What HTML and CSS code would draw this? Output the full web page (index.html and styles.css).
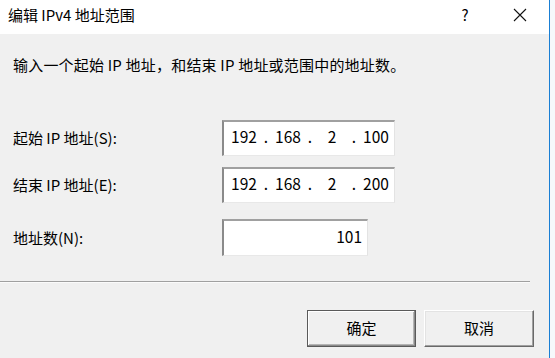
FILE: index.html
```html
<!DOCTYPE html>
<html lang="zh-CN">
<head>
<meta charset="utf-8">
<title>编辑 IPv4 地址范围</title>
<link rel="stylesheet" href="styles.css">
</head>
<body>
<div class="screen">
  <div class="window">
    <div class="titlebar">
      <span class="title">编辑 IPv4 地址范围</span>
      <span class="help">?</span>
      <span class="close">
        <svg width="14" height="14" viewBox="0 0 14 14"><path d="M1 1 L13 13 M13 1 L1 13" stroke="#111" stroke-width="1.1" fill="none"/></svg>
      </span>
    </div>
    <div class="content">
      <p class="intro">输入一个起始 IP 地址，和结束 IP 地址或范围中的地址数。</p>
      <div class="row row-first">
        <span class="label">起始 IP 地址(S):</span>
        <div class="edit ip">
          <span class="oct">192</span><span class="dot">.</span><span class="oct">168</span><span class="dot">.</span><span class="oct">2</span><span class="dot">.</span><span class="oct">100</span>
        </div>
      </div>
      <div class="row row-second">
        <span class="label">结束 IP 地址(E):</span>
        <div class="edit ip">
          <span class="oct">192</span><span class="dot">.</span><span class="oct">168</span><span class="dot">.</span><span class="oct">2</span><span class="dot">.</span><span class="oct">200</span>
        </div>
      </div>
      <div class="row row-third">
        <span class="label">地址数(N):</span>
        <div class="edit count">101</div>
      </div>
      <div class="sep"></div>
      <div class="buttons">
        <button class="btn btn-default">确定</button>
        <button class="btn">取消</button>
      </div>
    </div>
  </div>
</div>
</body>
</html>
```

FILE: styles.css
```css
html, body {
  margin: 0;
  padding: 0;
  width: 555px;
  height: 358px;
  overflow: hidden;
  background: #f6f9fb;
  font-family: "Noto Sans CJK SC", "Noto Sans", sans-serif;
  font-size: 15px;
  color: #000;
}

.screen {
  display: flex;
  height: 358px;
}

.window {
  width: 549px;
  height: 358px;
  background: #f0f0f0;
  border-right: 1px solid #1a7fd4;
  display: flex;
  flex-direction: column;
}

.titlebar {
  height: 34px;
  background: #fff;
  display: flex;
  align-items: center;
  padding-bottom: 4px;
  box-sizing: border-box;
}

.title {
  flex: 1;
  padding-left: 8px;
  font-size: 15px;
  line-height: 20px;
}

.help {
  width: 20px;
  text-align: center;
  font-size: 15px;
  line-height: 20px;
}

.close {
  width: 20px;
  height: 20px;
  margin-left: 35px;
  margin-right: 19px;
  display: flex;
  align-items: center;
  justify-content: center;
}

.content {
  padding-left: 13px;
  display: flex;
  flex-direction: column;
}

.intro {
  margin: 21px 0 0;
  line-height: 20px;
  font-size: 15px;
  letter-spacing: 0.2px;
}

.row {
  display: flex;
  align-items: center;
}

.row-first { margin-top: 45px; }
.row-second { margin-top: 11px; }
.row-third { margin-top: 16px; }

.label {
  width: 209px;
  font-size: 15px;
  line-height: 20px;
}

.edit {
  box-sizing: border-box;
  height: 36px;
  background: #fff;
  border-top: 2px solid #a0a0a0;
  border-left: 2px solid #8a8a8a;
  border-right: 1px solid #e3e3e3;
  border-bottom: 1px solid #e8e8e8;
  font-size: 15.5px;
  display: flex;
  align-items: center;
  padding-bottom: 5px;
}

.ip {
  width: 173px;
  padding-left: 4px;
}

.oct {
  width: 32px;
  text-align: center;
  line-height: 20px;
}

.dot {
  width: 12px;
  text-align: center;
  line-height: 20px;
}

.count {
  width: 146px;
  justify-content: flex-end;
  padding-right: 5px;
  height: 37px;
}

.sep {
  margin-top: 25px;
  margin-left: -13px;
  width: 530px;
  height: 1px;
  background: #a0a0a0;
  border-bottom: 1px solid #fbfbfb;
}

.buttons {
  margin-top: 27px;
  display: flex;
  justify-content: flex-end;
  gap: 8px;
  padding-right: 15px;
}

.btn {
  box-sizing: border-box;
  width: 110px;
  height: 37px;
  font-family: "Noto Sans CJK SC", "Noto Sans", sans-serif;
  font-size: 15px;
  color: #000;
  background: #f0f0f0;
  border-top: 1px solid #fff;
  border-left: 1px solid #fff;
  border-right: 1px solid #696969;
  border-bottom: 1px solid #696969;
  box-shadow: inset -1px -1px 0 #a0a0a0, inset 1px 1px 0 #e3e3e3;
  padding: 0 0 2px;
}

.btn-default {
  width: 109px;
  border: 1px solid #5a5a5a;
  box-shadow: inset -1px -1px 0 #8a8a8a, inset 1px 1px 0 #fff, inset -2px -2px 0 #b4b4b4;
}
```
